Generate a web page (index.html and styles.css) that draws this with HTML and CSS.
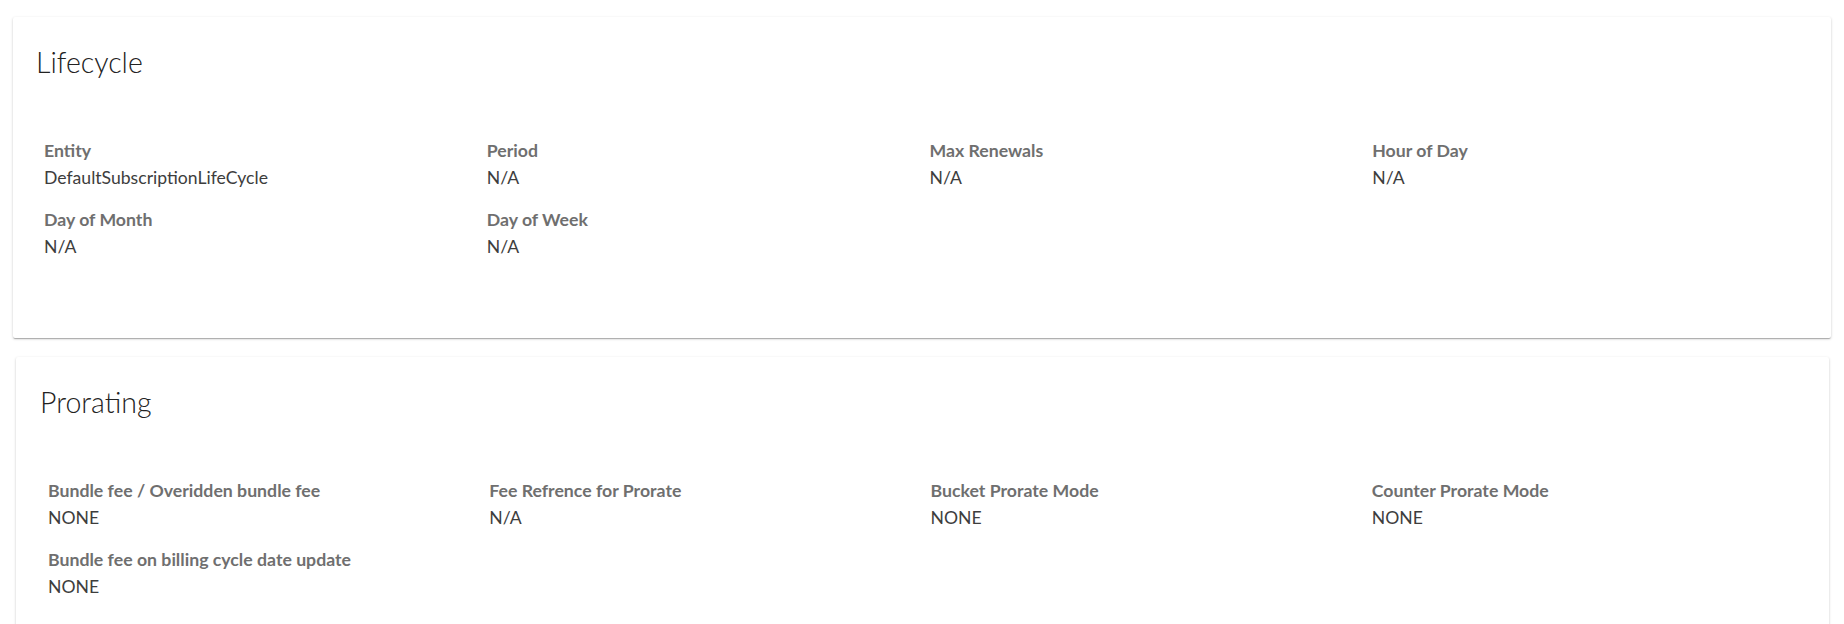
FILE: index.html
```html
<!DOCTYPE html>
<html lang="en">
<head>
<meta charset="utf-8">
<title>Lifecycle and Prorating</title>
<link rel="stylesheet" href="styles.css">
</head>
<body>
  <section class="card card-lifecycle">
    <h2 class="card-title">Lifecycle</h2>
    <div class="fields">
      <div class="field"><div class="label">Entity</div><div class="value">DefaultSubscriptionLifeCycle</div></div>
      <div class="field"><div class="label">Period</div><div class="value">N/A</div></div>
      <div class="field"><div class="label">Max Renewals</div><div class="value">N/A</div></div>
      <div class="field"><div class="label">Hour of Day</div><div class="value">N/A</div></div>
      <div class="field"><div class="label">Day of Month</div><div class="value">N/A</div></div>
      <div class="field"><div class="label">Day of Week</div><div class="value">N/A</div></div>
    </div>
  </section>
  <section class="card card-prorating">
    <h2 class="card-title">Prorating</h2>
    <div class="fields">
      <div class="field"><div class="label">Bundle fee / Overidden bundle fee</div><div class="value">NONE</div></div>
      <div class="field"><div class="label">Fee Refrence for Prorate</div><div class="value">N/A</div></div>
      <div class="field"><div class="label">Bucket Prorate Mode</div><div class="value">NONE</div></div>
      <div class="field"><div class="label">Counter Prorate Mode</div><div class="value">NONE</div></div>
      <div class="field"><div class="label">Bundle fee on billing cycle date update</div><div class="value">NONE</div></div>
    </div>
  </section>
</body>
</html>
```

FILE: styles.css
```css
* { box-sizing: border-box; }
html, body { background: #ffffff; }
body {
  margin: 0;
  padding: 17px 0 0;
  font-family: Lato, "Open Sans", "Liberation Sans", sans-serif;
  color: #333;
}
.card {
  background: #fff;
  border-radius: 2px;
  box-shadow: 0 1px 3px rgba(0,0,0,0.18), 0 1px 1px rgba(0,0,0,0.12), 0 2px 1px -1px rgba(0,0,0,0.14);
}
.card-lifecycle {
  margin: 0 13px 0 13px;
  padding: 29px 16px 78px 31px;
}
.card-prorating {
  margin: 19px 15px 0 16px;
  padding: 29px 16px 78px 32px;
}
.card-title {
  margin: 0 0 0 -8px;
  font-size: 28.5px;
  line-height: 32px;
  font-weight: 300;
  color: #222;
}
.fields {
  margin-top: 59px;
  display: grid;
  grid-template-columns: repeat(4, 1fr);
  row-gap: 15px;
}
.label {
  font-size: 17.7px;
  line-height: 27px;
  font-weight: 700;
  color: #6f6f6f;
}
.value {
  font-size: 17.6px;
  line-height: 27px;
  color: #3d3d3d;
}
```
